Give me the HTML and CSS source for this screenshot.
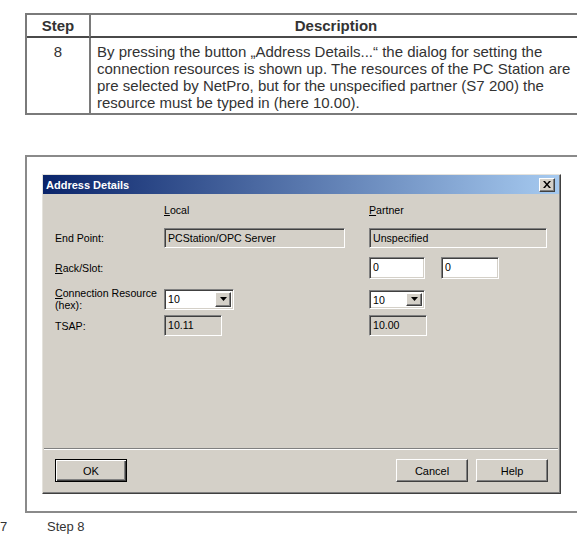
FILE: index.html
```html
<!DOCTYPE html>
<html>
  <head>
    <meta charset="UTF-8" />
    <title>Step 8 - Address Details</title>
    <link rel="stylesheet" href="styles.css">
  </head>
  <body>
    <table class="steps">
      <thead>
        <tr>
          <th class="step-col">Step</th>
          <th class="desc-col">Description</th>
        </tr>
      </thead>
      <tbody>
        <tr>
          <td class="step-col">8</td>
          <td class="desc-col">By pressing the button „Address Details...“ the dialog for setting the connection resources is shown up. The resources of the PC Station are pre selected by NetPro, but for the unspecified partner (S7 200) the resource must be typed in (here 10.00).</td>
        </tr>
      </tbody>
    </table>

    <div class="figure">
      <div class="dialog">
        <div class="titlebar">
          <span class="title">Address Details</span>
          <span class="close">
            <svg width="8" height="7" viewBox="0 0 8 7">
              <path d="M0 0h2l2 2.5L6 0h2L5 3.5 8 7H6L4 4.5 2 7H0l3-3.5z" fill="#000"/>
            </svg>
          </span>
        </div>
        <div class="dialog-body">
          <div class="form">
            <div class="row head">
              <span></span>
              <span><u>L</u>ocal</span>
              <span><u>P</u>artner</span>
            </div>
            <div class="row endpoint">
              <span>End Point:</span>
              <div class="field wide">PCStation/OPC Server</div>
              <div class="field wide-p">Unspecified</div>
            </div>
            <div class="row rack">
              <span><u>R</u>ack/Slot:</span>
              <span></span>
              <div class="pair">
                <div class="field white rack-a">0</div>
                <div class="field white rack-b">0</div>
              </div>
            </div>
            <div class="row conn">
              <span class="two-line"><u>C</u>onnection Resource<br>(hex):</span>
              <div class="combo local">
                <span class="value">10</span>
                <span class="arrow">
                  <svg width="7" height="4" viewBox="0 0 7 4"><path d="M0 0h7L3.5 4z" fill="#000"/></svg>
                </span>
              </div>
              <div class="combo partner">
                <span class="value">10</span>
                <span class="arrow">
                  <svg width="7" height="4" viewBox="0 0 7 4"><path d="M0 0h7L3.5 4z" fill="#000"/></svg>
                </span>
              </div>
            </div>
            <div class="row tsap">
              <span>TSAP:</span>
              <div class="field short">10.11</div>
              <div class="field short">10.00</div>
            </div>
          </div>
          <div class="separator"></div>
          <div class="buttons">
            <button class="btn default">OK</button>
            <span class="spacer"></span>
            <button class="btn">Cancel</button>
            <button class="btn">Help</button>
          </div>
        </div>
      </div>
    </div>

    <div class="caption">
      <span class="fig-no">7</span>
      <span>Step 8</span>
    </div>
  </body>
</html>
```

FILE: styles.css
```css
html,
body {
  margin: 0;
}
body {
  background-color: #ffffff;
  font-family: "Liberation Sans", Arial, sans-serif;
  color: #333333;
  overflow: hidden;
  padding: 13px 0 0 25px;
}

/* step table */
.steps {
  width: 558px;
  border-collapse: separate;
  border-spacing: 0;
  border: 2px solid #7a7a7a;
  font-size: 15px;
  line-height: 17px;
  color: #333333;
}
.steps th,
.steps td {
  padding: 0;
  vertical-align: top;
}
.steps th {
  height: 23px;
  padding-top: 2px;
  box-sizing: border-box;
  text-align: center;
  font-weight: bold;
  border-bottom: 2px solid #4a4a4a;
}
.steps .step-col {
  width: 62px;
  text-align: center;
}
.steps .desc-col {
  border-left: 2px solid #7a7a7a;
}
.steps td {
  padding-top: 5px;
  padding-bottom: 2px;
}
.steps td.desc-col {
  padding-left: 6px;
  padding-right: 2px;
  text-align: left;
}

/* screenshot frame */
.figure {
  margin-top: 40px;
  width: 600px;
  height: 358px;
  box-sizing: border-box;
  border: 2px solid #8a8a8a;
  padding: 17px 0 0 15px;
}

/* windows dialog */
.dialog {
  width: 519px;
  height: 320px;
  box-sizing: border-box;
  display: flex;
  flex-direction: column;
  background-color: #d4d0c8;
  border: 1px solid;
  border-color: #e4e2dc #404040 #404040 #e4e2dc;
  box-shadow: inset -1px -1px #808080;
  padding: 0 1px 1px 0;
  font-family: "Liberation Sans", Arial, sans-serif;
  font-size: 10.6px;
  color: #000000;
}
.titlebar {
  height: 19px;
  display: flex;
  align-items: center;
  justify-content: space-between;
  padding: 0 4px 0 3px;
  background: linear-gradient(to right, #0a246a, #a6caf0);
}
.title {
  color: #ffffff;
  font-weight: bold;
  font-size: 11px;
}
.close {
  width: 16px;
  height: 14px;
  box-sizing: border-box;
  display: flex;
  align-items: center;
  justify-content: center;
  background-color: #d4d0c8;
  border: 1px solid;
  border-color: #ffffff #404040 #404040 #ffffff;
  box-shadow: inset -1px -1px #808080;
}

.dialog-body {
  flex: 1;
  display: flex;
  flex-direction: column;
}
.form {
  padding: 10px 0 0 12px;
}
.row {
  display: grid;
  grid-template-columns: 109px 205px 1fr;
  align-items: center;
}
.row.head {
  line-height: 13px;
}
.row.endpoint {
  margin-top: 11px;
}
.row.rack {
  margin-top: 9px;
}
.row.conn {
  margin-top: 8px;
}
.row.tsap {
  margin-top: 4px;
}
.two-line {
  line-height: 12px;
}

.field {
  height: 20px;
  box-sizing: border-box;
  border: 1px solid;
  border-color: #808080 #ffffff #ffffff #808080;
  box-shadow: inset 1px 1px #404040, inset -1px -1px #d4d0c8;
  padding: 2px 3px;
  line-height: 14px;
  background-color: #d4d0c8;
  white-space: nowrap;
}
.field.white {
  background-color: #ffffff;
}
.field.wide {
  width: 181px;
}
.field.wide-p {
  width: 178px;
}
.pair {
  display: flex;
  gap: 16px;
}
.rack-a {
  width: 56px;
  height: 22px;
}
.rack-b {
  width: 58px;
  height: 22px;
}
.field.short {
  width: 58px;
  height: 21px;
}

.combo {
  display: flex;
  box-sizing: border-box;
  background-color: #ffffff;
  border: 1px solid;
  border-color: #808080 #ffffff #ffffff #808080;
  box-shadow: inset 1px 1px #404040, inset -1px -1px #d4d0c8;
  padding: 2px;
}
.combo.local {
  width: 70px;
  height: 21px;
}
.combo.partner {
  width: 56px;
  height: 19px;
}
.combo .value {
  flex: 1;
  padding-left: 1px;
  line-height: 14px;
}
.combo .arrow {
  width: 16px;
  box-sizing: border-box;
  display: flex;
  align-items: center;
  justify-content: center;
  background-color: #d4d0c8;
  border: 1px solid;
  border-color: #ffffff #404040 #404040 #ffffff;
  box-shadow: inset -1px -1px #808080;
}

.separator {
  margin: auto 1px 0 1px;
  border-top: 1px solid #808080;
  border-bottom: 1px solid #ffffff;
}
.buttons {
  display: flex;
  gap: 8px;
  padding: 9px 11px 10px 12px;
}
.spacer {
  flex: 1;
}
.btn {
  width: 72px;
  height: 23px;
  box-sizing: border-box;
  margin: 0;
  padding: 0;
  font-family: "Liberation Sans", Arial, sans-serif;
  font-size: 11px;
  color: #000000;
  background-color: #d4d0c8;
  border: 1px solid;
  border-color: #ffffff #404040 #404040 #ffffff;
  box-shadow: inset -1px -1px #808080;
}
.btn.default {
  border-color: #000000;
  box-shadow: inset 1px 1px #ffffff, inset -1px -1px #404040, inset -2px -2px #808080;
}

.caption {
  display: flex;
  margin: 7px 0 0 -25px;
  font-size: 13px;
  line-height: 14px;
  color: #333333;
}
.fig-no {
  width: 47px;
}
```
